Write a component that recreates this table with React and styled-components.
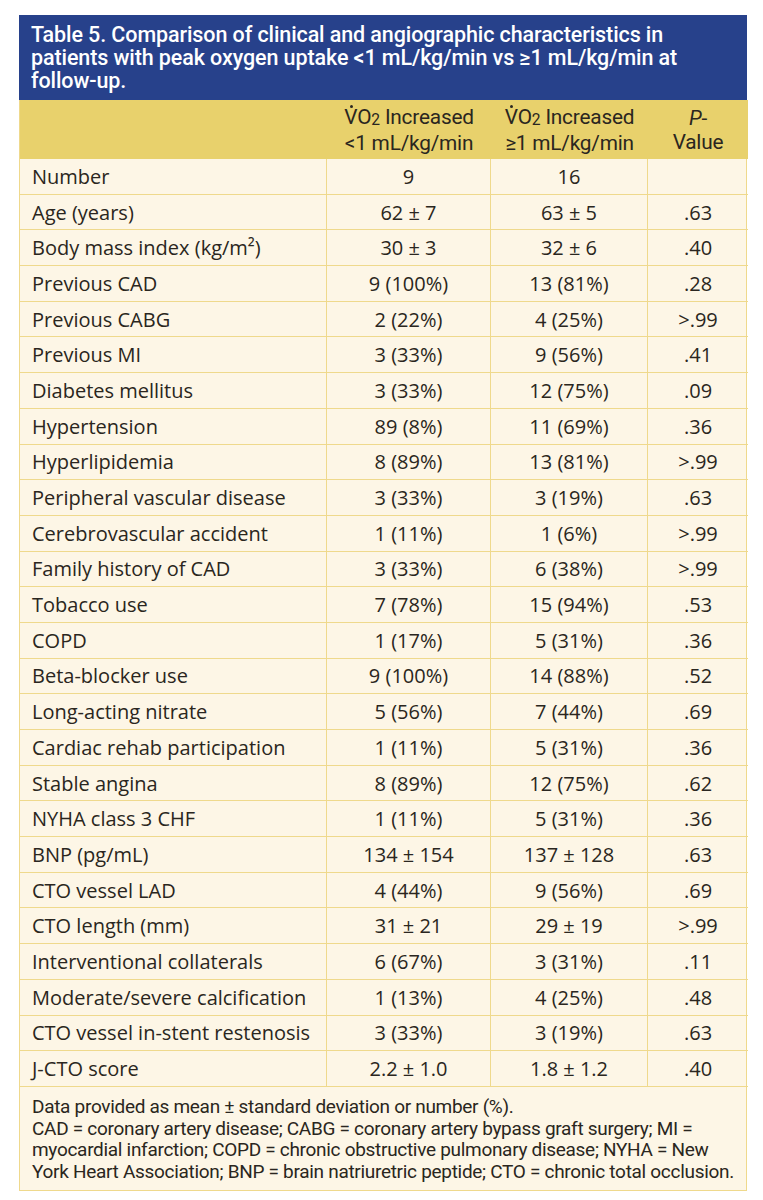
import React from "react";
import styled, { createGlobalStyle } from "styled-components";

const Global = createGlobalStyle`
  html, body { margin: 0; padding: 0; background: #ffffff; }
  body { font-family: "Open Sans", Lato, sans-serif; }
`;

const Page = styled.div`
  padding: 15px 16px 16px 19px;
`;

const Wrap = styled.div`
  width: 728px;
`;

const Title = styled.div`
  background: #27418b;
  color: #ffffff;
  font-family: Roboto, "Liberation Sans", sans-serif;
  font-weight: 500;
  font-size: 21.5px;
  line-height: 23px;
  letter-spacing: -0.1px;
  padding: 8px 12px 8px 12px;
  white-space: nowrap;
`;

const Grid = styled.div`
  display: grid;
  grid-template-columns: 307px 164px 157px 100px;
  background: #fdf6e6;
  border-left: 1.5px solid #efd98c;
  border-right: 1.5px solid #efd98c;
`;

const HeadCell = styled.div`
  background: #e8d16c;
  color: #2a2620;
  font-family: Roboto, "Liberation Sans", sans-serif;
  font-size: 20.8px;
  line-height: 24px;
  text-align: center;
  height: 59px;
  display: flex;
  flex-direction: column;
  justify-content: center;
  letter-spacing: -0.2px;
`;

const Cell = styled.div`
  height: 35.7px;
  box-sizing: border-box;
  border-bottom: 1.5px solid #efd98c;
  border-right: ${(p) => (p.$last ? "none" : "1.5px solid #efd98c")};
  display: flex;
  align-items: center;
  justify-content: ${(p) => (p.$label ? "flex-start" : "center")};
  padding-left: ${(p) => (p.$label ? "12px" : "0")};
  font-size: 20px;
  color: #2a2620;
  white-space: nowrap;
`;

const Dot = styled.span`
  position: relative;
  display: inline-block;
  &::before {
    content: "";
    position: absolute;
    left: 50%;
    top: 0px;
    width: 3px;
    height: 3px;
    margin-left: -1px;
    background: #2a2620;
    border-radius: 50%;
  }
`;

const Sub = styled.span`
  font-size: 0.75em;
  position: relative;
  top: 0.1em;
`;

const Footer = styled.div`
  background: #fdf6e6;
  border: 1.5px solid #efd98c;
  border-top: none;
  font-family: Roboto, "Liberation Sans", sans-serif;
  font-size: 19px;
  line-height: 21.7px;
  color: #2a2620;
  padding: 9px 12px 7px 12px;
  letter-spacing: -0.3px;
  white-space: nowrap;
`;

const rows = [
  ["Number", "9", "16", ""],
  ["Age (years)", "62 ± 7", "63 ± 5", ".63"],
  ["Body mass index (kg/m²)", "30 ± 3", "32 ± 6", ".40"],
  ["Previous CAD", "9 (100%)", "13 (81%)", ".28"],
  ["Previous CABG", "2 (22%)", "4 (25%)", ">.99"],
  ["Previous MI", "3 (33%)", "9 (56%)", ".41"],
  ["Diabetes mellitus", "3 (33%)", "12 (75%)", ".09"],
  ["Hypertension", "89 (8%)", "11 (69%)", ".36"],
  ["Hyperlipidemia", "8 (89%)", "13 (81%)", ">.99"],
  ["Peripheral vascular disease", "3 (33%)", "3 (19%)", ".63"],
  ["Cerebrovascular accident", "1 (11%)", "1 (6%)", ">.99"],
  ["Family history of CAD", "3 (33%)", "6 (38%)", ">.99"],
  ["Tobacco use", "7 (78%)", "15 (94%)", ".53"],
  ["COPD", "1 (17%)", "5 (31%)", ".36"],
  ["Beta-blocker use", "9 (100%)", "14 (88%)", ".52"],
  ["Long-acting nitrate", "5 (56%)", "7 (44%)", ".69"],
  ["Cardiac rehab participation", "1 (11%)", "5 (31%)", ".36"],
  ["Stable angina", "8 (89%)", "12 (75%)", ".62"],
  ["NYHA class 3 CHF", "1 (11%)", "5 (31%)", ".36"],
  ["BNP (pg/mL)", "134 ± 154", "137 ± 128", ".63"],
  ["CTO vessel LAD", "4 (44%)", "9 (56%)", ".69"],
  ["CTO length (mm)", "31 ± 21", "29 ± 19", ">.99"],
  ["Interventional collaterals", "6 (67%)", "3 (31%)", ".11"],
  ["Moderate/severe calcification", "1 (13%)", "4 (25%)", ".48"],
  ["CTO vessel in-stent restenosis", "3 (33%)", "3 (19%)", ".63"],
  ["J-CTO score", "2.2 ± 1.0", "1.8 ± 1.2", ".40"],
];

const VO2 = () => (
  <span>
    <Dot>V</Dot>O<Sub>2</Sub>
  </span>
);

export default function App() {
  return (
    <Page>
      <Global />
      <Wrap>
        <Title>
          Table 5. Comparison of clinical and angiographic characteristics in
          <br />
          patients with peak oxygen uptake &lt;1 mL/kg/min vs ≥1 mL/kg/min at
          <br />
          follow-up.
        </Title>
        <Grid>
          <HeadCell />
          <HeadCell>
            <div>
              <VO2 /> Increased
            </div>
            <div>&lt;1 mL/kg/min</div>
          </HeadCell>
          <HeadCell>
            <div>
              <VO2 /> Increased
            </div>
            <div>≥1 mL/kg/min</div>
          </HeadCell>
          <HeadCell>
            <div>
              <i>P</i>-
            </div>
            <div>Value</div>
          </HeadCell>
          {rows.map((r) => (
            <React.Fragment key={r[0]}>
              <Cell $label>{r[0]}</Cell>
              <Cell>{r[1]}</Cell>
              <Cell>{r[2]}</Cell>
              <Cell $last>{r[3]}</Cell>
            </React.Fragment>
          ))}
        </Grid>
        <Footer>
          Data provided as mean ± standard deviation or number (%).
          <br />
          CAD = coronary artery disease; CABG = coronary artery bypass graft
          surgery; MI =
          <br />
          myocardial infarction; COPD = chronic obstructive pulmonary disease;
          NYHA = New
          <br />
          York Heart Association; BNP = brain natriuretric peptide; CTO =
          chronic total occlusion.
        </Footer>
      </Wrap>
    </Page>
  );
}
